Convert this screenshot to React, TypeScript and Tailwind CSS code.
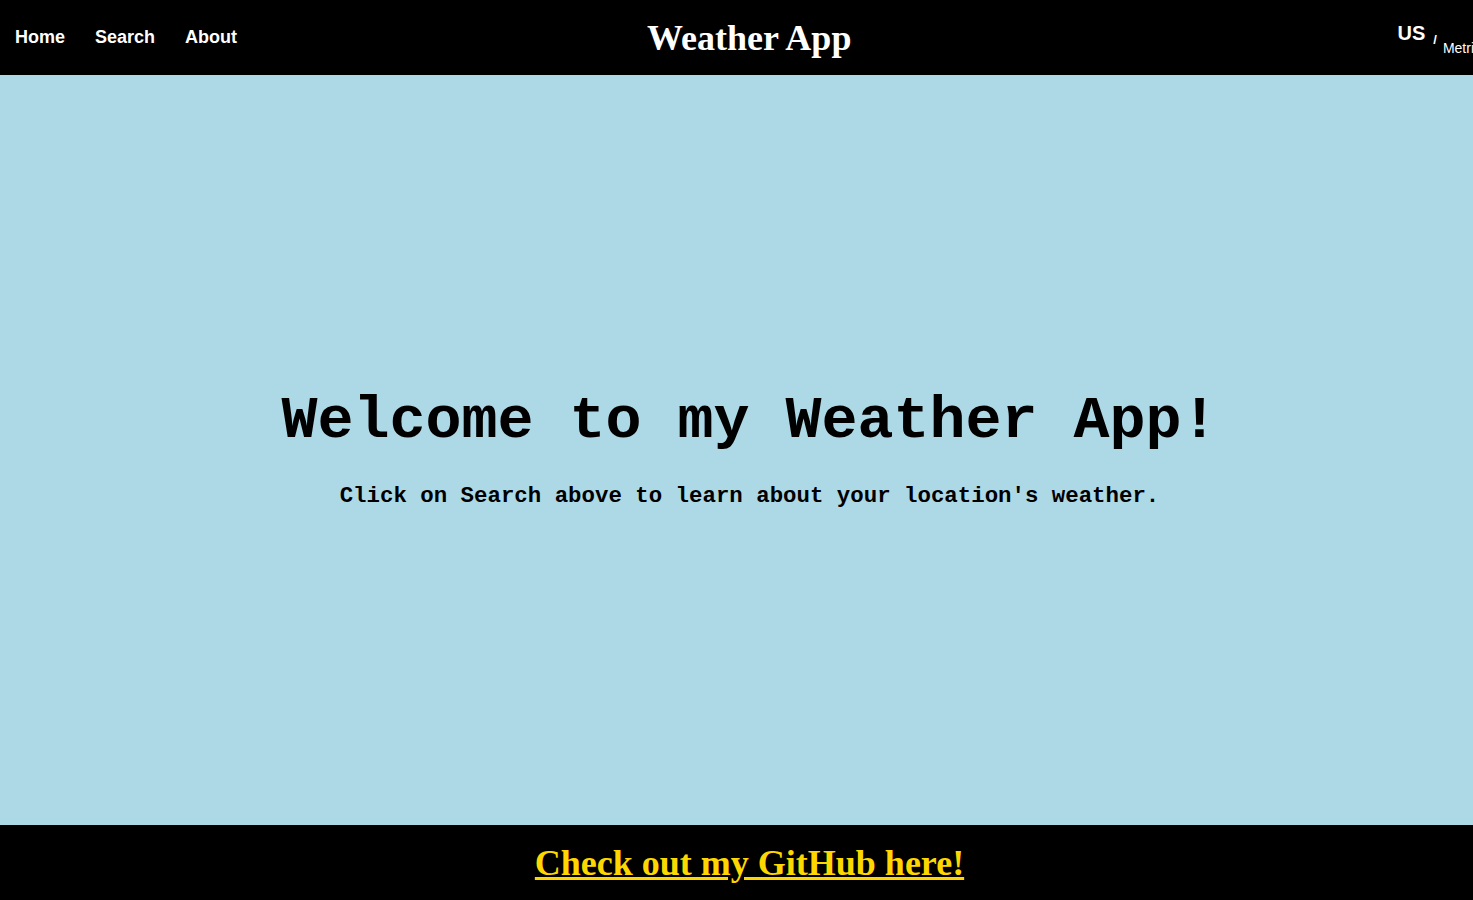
export default function App() {
    return (
        <div className="w-full h-[900px] overflow-hidden bg-[#add8e6]">
            <div className="w-[1499px] h-[900px] flex flex-col">
                {/* Header */}
                <header className="h-[75px] bg-black flex items-center text-white shrink-0">
                    <nav className="flex items-center gap-[30px] pl-[15px] font-['Liberation_Sans',Arial,sans-serif] font-bold text-[18px]">
                        <a href="#" className="text-white">Home</a>
                        <a href="#" className="text-white">Search</a>
                        <a href="#" className="text-white">About</a>
                    </nav>
                    <h1 className="ml-[410px] font-['Liberation_Serif','Times_New_Roman',serif] font-bold text-[36px] leading-none">
                        Weather App
                    </h1>
                    <div className="ml-auto self-start mt-[23px] pr-[18px] flex items-baseline font-['Liberation_Sans',Arial,sans-serif] text-white">
                        <span className="font-bold text-[20px] leading-[20px]">US</span>
                        <span className="font-bold text-[13px] leading-[13px] ml-[8px] relative top-[4px]">/</span>
                        <span className="text-[14px] leading-[14px] ml-[6px] relative top-[13px]">Metric</span>
                    </div>
                </header>

                {/* Main */}
                <main className="flex-1 flex flex-col items-center justify-center text-black font-['Liberation_Mono','Courier_New',monospace] font-bold">
                    <h2 className="text-[60px] leading-[68px]">Welcome to my Weather App!</h2>
                    <p className="text-[22.4px] leading-[33px] mt-[25px]">
                        Click on Search above to learn about your location's weather.
                    </p>
                </main>

                {/* Footer */}
                <footer className="h-[75px] bg-black flex items-center justify-center shrink-0">
                    <a
                        href="#"
                        className="text-[#ffd700] underline font-['Liberation_Serif','Times_New_Roman',serif] font-bold text-[36px] leading-none"
                    >
                        Check out my GitHub here!
                    </a>
                </footer>
            </div>
        </div>
    );
}
